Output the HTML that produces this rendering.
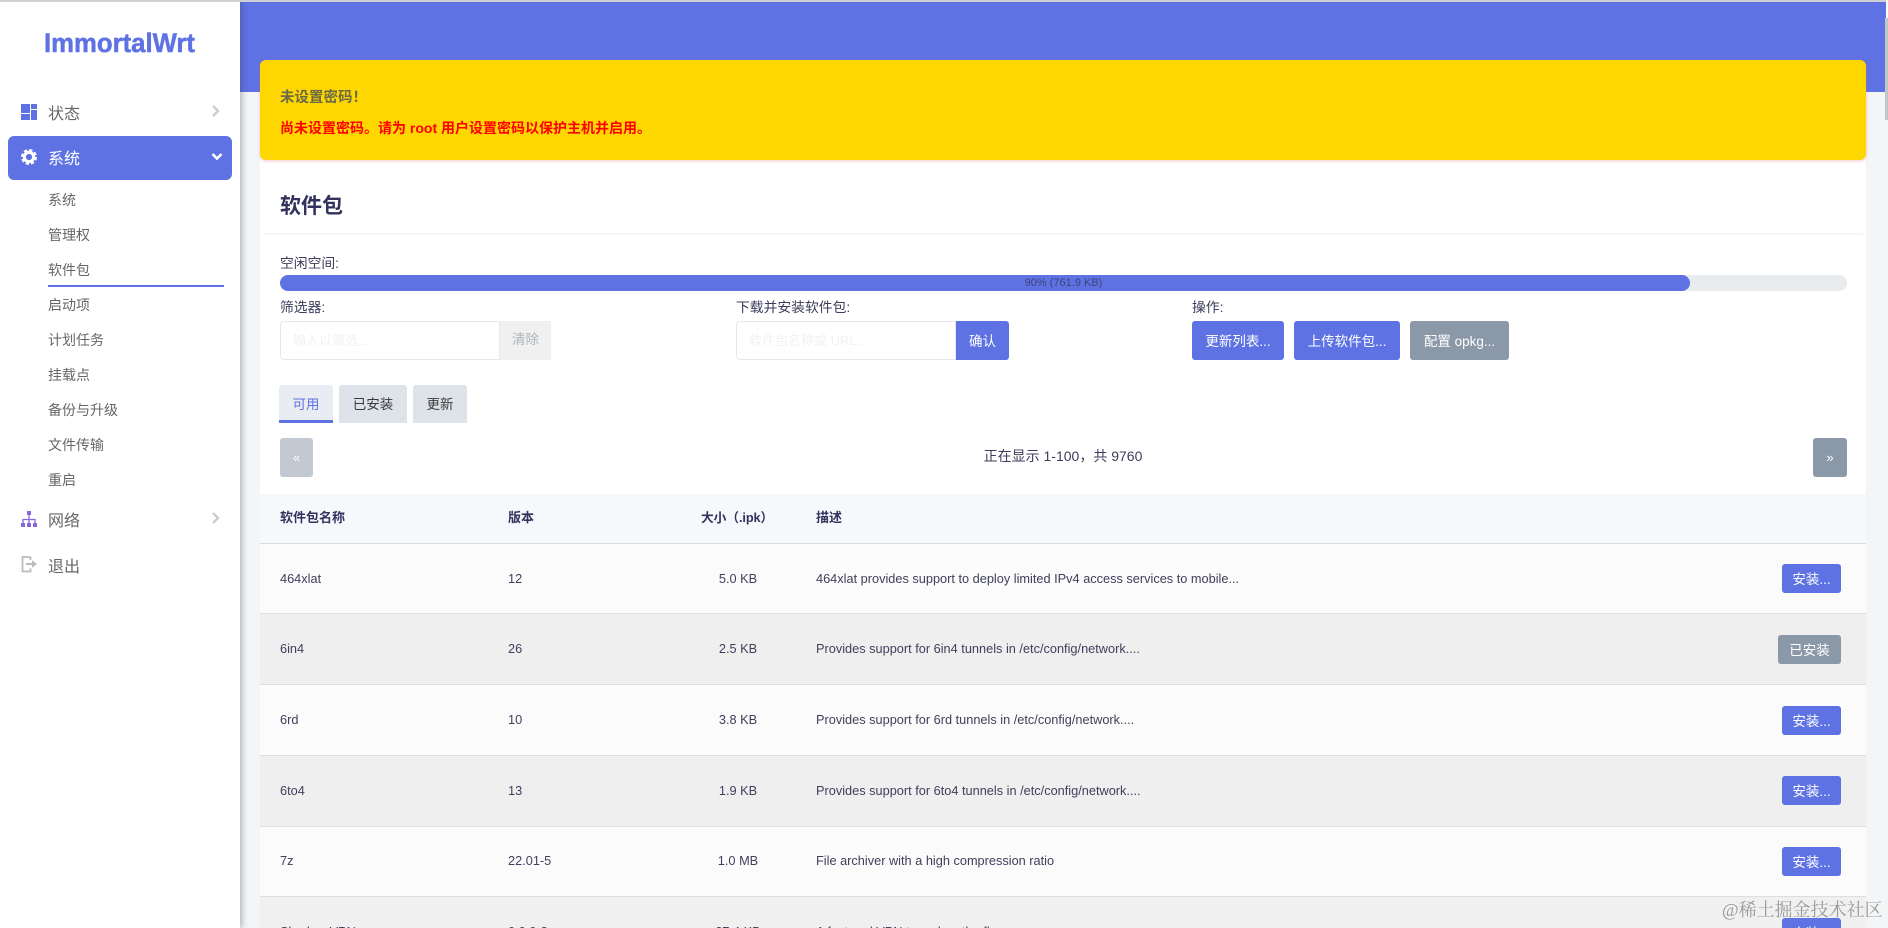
<!DOCTYPE html>
<html lang="zh"><head><meta charset="utf-8"><title>软件包</title>
<style>
*{box-sizing:border-box}
html,body{margin:0;padding:0;width:1888px;height:928px;overflow:hidden;background:#f4f5f7;font-family:"Liberation Sans","Noto Sans CJK SC",sans-serif}
#w{position:relative;width:1888px;height:928px;overflow:hidden;background:#f4f5f7}
.a{position:absolute}
.t{position:absolute;white-space:nowrap;line-height:20px}
.sub{font-size:14px;color:#666;left:48px}
.m{font-size:16px;color:#666;left:48px}
.b{position:absolute;background:#5e72e4;color:#fff;font-size:13.5px;display:flex;align-items:center;justify-content:center;border-radius:3px;white-space:nowrap;padding-bottom:1px}
.g{background:#8a98a8}
.lab{font-size:13.8px;color:#3c3c5c}
.inp{position:absolute;background:#fff;border:1px solid #e6e8ec;border-radius:4px 0 0 4px;height:39px;top:321px;font-size:13px;color:#f0f1f3;line-height:37px;padding-left:12px;white-space:nowrap}
.r{position:absolute;left:260px;width:1606px;border-bottom:1px solid #dcdee2}
.c{font-size:12.75px;color:#3f3f5c}
.z{left:698px;width:80px;text-align:center}
.tab{position:absolute;top:385px;height:38px;font-size:13.5px;background:#dee2e9;color:#3a3a3a;display:flex;align-items:center;justify-content:center;border-radius:3px 3px 0 0;padding-bottom:2px}
</style></head><body><div id="w">
<div class="a" style="left:0;top:0;width:1888px;height:2px;background:#cfd0d4;z-index:5"></div>

<div class="a" style="left:240px;top:2px;width:1648px;height:90px;background:#5e72e4"></div>
<div class="a" style="left:1885px;top:18px;width:3px;height:102px;background:#c4c5c9;z-index:6"></div>
<div class="a" style="left:1886px;top:0;width:2px;height:18px;background:#fff;z-index:6"></div>

<div class="a" style="left:0;top:0;width:240px;height:928px;background:#fff;box-shadow:2px 0 6px rgba(60,60,70,.35);z-index:3">
 <svg class="a" style="left:0;top:0" width="240" height="70"><text x="44" y="52" font-family="Liberation Sans" font-weight="700" font-size="27" fill="#5e72e4" stroke="#5e72e4" stroke-width=".5" textLength="151" lengthAdjust="spacingAndGlyphs">ImmortalWrt</text></svg>

 <svg class="a" style="left:21px;top:104px" width="16" height="16"><path d="M0 0h9v9H0zM10 0h6v5h-6zM0 10h9v6H0zM10 6h6v10h-6z" fill="#5e72e4"/></svg>
 <div class="t m" style="top:105px">状态</div>
 <svg class="a" style="left:211px;top:105px" width="10" height="12"><path d="M2 1l5 5-5 5" fill="none" stroke="#ccc" stroke-width="2.4"/></svg>

 <div class="a" style="left:8px;top:136px;width:224px;height:44px;background:#5e72e4;border-radius:6px"></div>
 <svg class="a" style="left:21px;top:149px" width="16" height="16" viewBox="0 0 16 16"><circle cx="8" cy="8" r="4.6" fill="none" stroke="#fff" stroke-width="3"/><circle cx="8" cy="8" r="6.8" fill="none" stroke="#fff" stroke-width="2.4" stroke-dasharray="3.3 2.04"/></svg>
 <div class="t m" style="top:150px;color:#fff">系统</div>
 <svg class="a" style="left:211px;top:152px" width="12" height="10"><path d="M1.5 2l4.5 4.5L10.5 2" fill="none" stroke="#fff" stroke-width="2.6"/></svg>

 <div class="t sub" style="top:190px">系统</div>
 <div class="t sub" style="top:225px">管理权</div>
 <div class="t sub" style="top:260px">软件包</div>
 <div class="a" style="left:48px;top:285px;width:176px;height:2px;background:#5e72e4"></div>
 <div class="t sub" style="top:295px">启动项</div>
 <div class="t sub" style="top:330px">计划任务</div>
 <div class="t sub" style="top:365px">挂载点</div>
 <div class="t sub" style="top:400px">备份与升级</div>
 <div class="t sub" style="top:435px">文件传输</div>
 <div class="t sub" style="top:470px">重启</div>

 <svg class="a" style="left:21px;top:511px" width="16" height="16"><path d="M6 0h4v4H6zM0 12h4v4H0zM6 12h4v4H6zM12 12h4v4h-4z" fill="#8965e0"/><path d="M8 4v8M2 12V8.500h12V12" fill="none" stroke="#8965e0" stroke-width="1.300"/></svg>
 <div class="t m" style="top:512px">网络</div>
 <svg class="a" style="left:211px;top:512px" width="10" height="12"><path d="M2 1l5 5-5 5" fill="none" stroke="#ccc" stroke-width="2.400"/></svg>

 <svg class="a" style="left:21px;top:556px" width="17" height="17"><path d="M9.500 1H1.500v14.500h8v-3M9.500 1v3" fill="none" stroke="#bbb" stroke-width="1.800"/><path d="M5 7h6V4.200L16 8l-5 3.800V9H5z" fill="#bbb"/></svg>
 <div class="t m" style="top:558px">退出</div>
</div>

<div class="a" style="left:260px;top:150px;width:1606px;height:778px;background:#fff"></div>
<div class="a" style="left:260px;top:60px;width:1606px;height:100px;background:#ffd700;border-radius:6px;box-shadow:0 1px 3px rgba(220,120,120,.4)"></div>
<div class="t" style="left:280px;top:88px;font-size:14.500px;font-weight:700;color:#6a6a45">未设置密码！</div>
<div class="t" style="left:280px;top:118px;font-size:14px;font-weight:700;color:#f00">尚未设置密码。请为 root 用户设置密码以保护主机并启用。</div>

<div class="t" style="left:280px;top:197px;font-size:21px;font-weight:700;color:#32325d">软件包</div>
<div class="a" style="left:263px;top:233px;width:1600px;height:2px;background:#f4f5f7"></div>

<div class="t lab" style="left:280px;top:254px">空闲空间:</div>
<div class="a" style="left:280px;top:275px;width:1567px;height:16px;background:#e9ecef;border-radius:8px"></div>
<div class="a" style="left:280px;top:275px;width:1410px;height:16px;background:#5e72e4;border-radius:8px"></div>
<div class="t" style="left:280px;top:273px;width:1567px;text-align:center;font-size:11px;color:#3c4478">90% (761.9 KB)</div>

<div class="t lab" style="left:280px;top:298px">筛选器:</div>
<div class="inp" style="left:280px;width:220px">输入以筛选...</div>
<div class="a" style="left:500px;top:321px;width:51px;height:39px;background:#f0f0f0;color:#adb5bd;font-size:13.500px;text-align:center;line-height:37px">清除</div>

<div class="t lab" style="left:736px;top:298px">下载并安装软件包:</div>
<div class="inp" style="left:736px;width:220px">软件包名称或 URL...</div>
<div class="b" style="left:956px;top:321px;width:53px;height:39px;border-radius:0 3px 3px 0">确认</div>

<div class="t lab" style="left:1192px;top:298px">操作:</div>
<div class="b" style="left:1192px;top:321px;width:92px;height:39px">更新列表...</div>
<div class="b" style="left:1294px;top:321px;width:106px;height:39px">上传软件包...</div>
<div class="b g" style="left:1410px;top:321px;width:99px;height:39px">配置 opkg...</div>

<div class="tab" style="left:279px;width:54px;background:#e9ecf2;color:#5e72e4;border-bottom:3px solid #5e72e4;padding-bottom:0">可用</div>
<div class="tab" style="left:339px;width:68px">已安装</div>
<div class="tab" style="left:413px;width:54px">更新</div>

<div class="b" style="left:280px;top:438px;width:33px;height:39px;background:#c2c9d2;font-size:13px">«</div>
<div class="t" style="left:700px;top:446px;width:726px;text-align:center;font-size:14px;color:#3c3c5c">正在显示 1-100，共 9760</div>
<div class="b g" style="left:1813px;top:438px;width:34px;height:39px;font-size:13px">»</div>

<div class="r" style="top:494px;height:50px;background:#f6f9fc;border-bottom:1px solid #d9dce1"></div>
<div class="t c" style="left:280px;top:508px;font-weight:700;color:#32325d;font-size:13px">软件包名称</div>
<div class="t c" style="left:508px;top:508px;font-weight:700;color:#32325d;font-size:13px">版本</div>
<div class="t c" style="left:701px;top:508px;font-weight:700;color:#32325d;letter-spacing:-.1px">大小（.ipk）</div>
<div class="t c" style="left:816px;top:508px;font-weight:700;color:#32325d;font-size:13px">描述</div>

<div class="r" style="top:544px;height:70px;background:#fbfbfb"></div>
<div class="r" style="top:614px;height:71px;background:#efefef"></div>
<div class="r" style="top:685px;height:71px;background:#fbfbfb"></div>
<div class="r" style="top:756px;height:71px;background:#efefef"></div>
<div class="r" style="top:827px;height:70px;background:#fbfbfb"></div>
<div class="a" style="left:260px;top:897px;width:1606px;height:31px;background:#f0f0f0"></div>

<div class="t c" style="left:280px;top:569px">464xlat</div><div class="t c" style="left:508px;top:569px">12</div><div class="t c z" style="top:569px">5.0 KB</div><div class="t c" style="left:816px;top:569px">464xlat provides support to deploy limited IPv4 access services to mobile...</div>
<div class="t c" style="left:280px;top:639px">6in4</div><div class="t c" style="left:508px;top:639px">26</div><div class="t c z" style="top:639px">2.5 KB</div><div class="t c" style="left:816px;top:639px">Provides support for 6in4 tunnels in /etc/config/network....</div>
<div class="t c" style="left:280px;top:710px">6rd</div><div class="t c" style="left:508px;top:710px">10</div><div class="t c z" style="top:710px">3.8 KB</div><div class="t c" style="left:816px;top:710px">Provides support for 6rd tunnels in /etc/config/network....</div>
<div class="t c" style="left:280px;top:781px">6to4</div><div class="t c" style="left:508px;top:781px">13</div><div class="t c z" style="top:781px">1.9 KB</div><div class="t c" style="left:816px;top:781px">Provides support for 6to4 tunnels in /etc/config/network....</div>
<div class="t c" style="left:280px;top:851px">7z</div><div class="t c" style="left:508px;top:851px">22.01-5</div><div class="t c z" style="top:851px">1.0 MB</div><div class="t c" style="left:816px;top:851px">File archiver with a high compression ratio</div>
<div class="t c" style="left:280px;top:922px">Shadow VPN</div><div class="t c" style="left:508px;top:922px">0.0.0-3</div><div class="t c z" style="top:922px">27.4 KB</div><div class="t c" style="left:816px;top:922px">A fast and VPN tunnel on the fly</div>

<div class="b" style="left:1782px;top:564px;width:59px;height:29px">安装...</div>
<div class="b g" style="left:1778px;top:635px;width:63px;height:29px">已安装</div>
<div class="b" style="left:1782px;top:706px;width:59px;height:29px">安装...</div>
<div class="b" style="left:1782px;top:776px;width:59px;height:29px">安装...</div>
<div class="b" style="left:1782px;top:847px;width:59px;height:29px">安装...</div>
<div class="b" style="left:1782px;top:918px;width:59px;height:29px">安装...</div>

<div class="t" style="left:1722px;top:900px;font-family:'Liberation Serif','Noto Serif CJK SC',serif;font-size:18px;color:#9a9a9a;z-index:7">@稀土掘金技术社区</div>
</div></body></html>
